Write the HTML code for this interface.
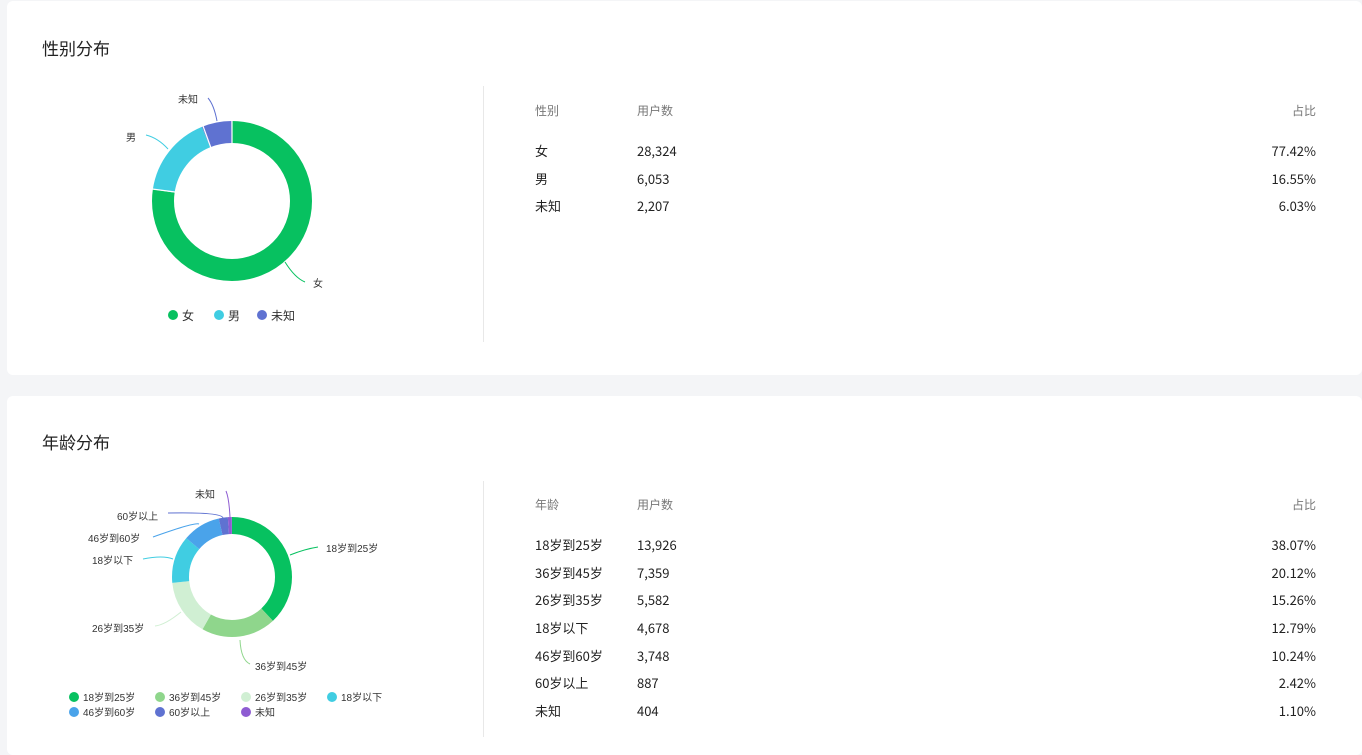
<!DOCTYPE html>
<html><head><meta charset="utf-8"><style>
body{margin:0;width:1362px;height:755px;background:#f4f5f7;font-family:"Liberation Sans","Noto Sans CJK SC",sans-serif;position:relative;overflow:hidden;color:#222}
.card{position:absolute;left:7px;right:0;background:#fff;border-radius:6px}
.t{position:absolute;left:35px;font-size:17px;color:#222}
.div{position:absolute;left:476px;width:1px;background:#e8e8e8}
.tbl{position:absolute;left:528px;right:46px;font-size:13px}
.row{position:relative;height:27.7px}
.row span{position:absolute;top:0;height:20px;line-height:20px;font-family:"Noto Sans CJK SC",sans-serif}
.c2{left:102px}.c3{right:0}
.hd{color:#777;font-size:12px}
svg text{font-family:"Liberation Sans","Noto Sans CJK SC",sans-serif;font-size:10px;fill:#333}
</style></head><body>
<div class="card" style="top:1px;height:374px">
<div class="t" style="top:34px">性别分布</div>
<div class="div" style="top:85px;height:256px"></div>
<div class="tbl" style="top:100px">
<div class="row hd" style="height:40px"><span>性别</span><span class="c2">用户数</span><span class="c3">占比</span></div>
<div class="row"><span>女</span><span class="c2">28,324</span><span class="c3">77.42%</span></div>
<div class="row"><span>男</span><span class="c2">6,053</span><span class="c3">16.55%</span></div>
<div class="row"><span>未知</span><span class="c2">2,207</span><span class="c3">6.03%</span></div>
</div>
</div>
<div class="card" style="top:396px;height:359px">
<div class="t" style="top:33px">年龄分布</div>
<div class="div" style="top:85px;height:256px"></div>
<div class="tbl" style="top:99px">
<div class="row hd" style="height:40px"><span>年龄</span><span class="c2">用户数</span><span class="c3">占比</span></div>
<div class="row"><span>18岁到25岁</span><span class="c2">13,926</span><span class="c3">38.07%</span></div>
<div class="row"><span>36岁到45岁</span><span class="c2">7,359</span><span class="c3">20.12%</span></div>
<div class="row"><span>26岁到35岁</span><span class="c2">5,582</span><span class="c3">15.26%</span></div>
<div class="row"><span>18岁以下</span><span class="c2">4,678</span><span class="c3">12.79%</span></div>
<div class="row"><span>46岁到60岁</span><span class="c2">3,748</span><span class="c3">10.24%</span></div>
<div class="row"><span>60岁以上</span><span class="c2">887</span><span class="c3">2.42%</span></div>
<div class="row"><span>未知</span><span class="c2">404</span><span class="c3">1.10%</span></div>
</div>
</div>
<svg width="470" height="755" style="position:absolute;left:0;top:0">
<g transform="rotate(-90 232 201)" fill="none" stroke-width="22">
<circle cx="232" cy="201" r="69" pathLength="100" stroke="#07c160" stroke-dasharray="77.42 100"/>
<circle cx="232" cy="201" r="69" pathLength="100" stroke="#40cde2" stroke-dasharray="0 77.42 16.55 100"/>
<circle cx="232" cy="201" r="69" pathLength="100" stroke="#5f72d1" stroke-dasharray="0 93.97 6.03 100"/>
</g>
<g stroke="#fff" stroke-width="1.2"><line x1="232" y1="121" x2="232" y2="143"/><line x1="152" y1="189" x2="175" y2="192"/><line x1="203" y1="126" x2="211" y2="148"/></g>
<g fill="none" stroke-width="1">
<path d="M285 262 Q295 278 305 282" stroke="#07c160"/>
<path d="M168 149 Q158 138 146 135" stroke="#40cde2"/>
<path d="M217 121 Q214 105 208 98" stroke="#5f72d1"/>
</g>
<text x="313" y="287">女</text><text x="126" y="141">男</text><text x="178" y="103">未知</text>
<circle cx="173" cy="315" r="5" fill="#07c160"/><text x="182" y="320" style="font-size:12px">女</text>
<circle cx="219" cy="315" r="5" fill="#40cde2"/><text x="228" y="320" style="font-size:12px">男</text>
<circle cx="262" cy="315" r="5" fill="#5f72d1"/><text x="271" y="320" style="font-size:12px">未知</text>

<g transform="rotate(-90 232 577)" fill="none" stroke-width="17">
<circle cx="232" cy="577" r="51.5" pathLength="100" stroke="#07c160" stroke-dasharray="38.07 100"/>
<circle cx="232" cy="577" r="51.5" pathLength="100" stroke="#8fd68c" stroke-dasharray="0 38.07 20.12 100"/>
<circle cx="232" cy="577" r="51.5" pathLength="100" stroke="#d0efd3" stroke-dasharray="0 58.19 15.26 100"/>
<circle cx="232" cy="577" r="51.5" pathLength="100" stroke="#40cde2" stroke-dasharray="0 73.45 12.79 100"/>
<circle cx="232" cy="577" r="51.5" pathLength="100" stroke="#4aa3ea" stroke-dasharray="0 86.24 10.24 100"/>
<circle cx="232" cy="577" r="51.5" pathLength="100" stroke="#5f72d1" stroke-dasharray="0 96.48 2.42 100"/>
<circle cx="232" cy="577" r="51.5" pathLength="100" stroke="#8e5cd2" stroke-dasharray="0 98.9 1.1 100"/>
</g>
<g fill="none" stroke-width="1">
<path d="M290 555 Q305 549 318 547" stroke="#07c160"/>
<path d="M240 640 Q241 660 250 664" stroke="#8fd68c"/>
<path d="M181 612 Q165 625 155 626" stroke="#d0efd3"/>
<path d="M173 559 Q163 555 143 559" stroke="#40cde2"/>
<path d="M199 524 Q195 522 153 537" stroke="#4aa3ea"/>
<path d="M223 518 Q222 512 168 513" stroke="#5f72d1"/>
<path d="M230 517 Q229 498 226 491" stroke="#8e5cd2"/>
</g>
<text x="326" y="552">18岁到25岁</text><text x="255" y="670">36岁到45岁</text>
<text x="92" y="632">26岁到35岁</text><text x="92" y="564">18岁以下</text>
<text x="88" y="542">46岁到60岁</text><text x="117" y="520">60岁以上</text><text x="195" y="498">未知</text>
<g style="font-size:11px">
<circle cx="74" cy="697" r="5" fill="#07c160"/><text x="83" y="701">18岁到25岁</text>
<circle cx="160" cy="697" r="5" fill="#8fd68c"/><text x="169" y="701">36岁到45岁</text>
<circle cx="246" cy="697" r="5" fill="#d0efd3"/><text x="255" y="701">26岁到35岁</text>
<circle cx="332" cy="697" r="5" fill="#40cde2"/><text x="341" y="701">18岁以下</text>
<circle cx="74" cy="712" r="5" fill="#4aa3ea"/><text x="83" y="716">46岁到60岁</text>
<circle cx="160" cy="712" r="5" fill="#5f72d1"/><text x="169" y="716">60岁以上</text>
<circle cx="246" cy="712" r="5" fill="#8e5cd2"/><text x="255" y="716">未知</text>
</g>
</svg>
</body></html>
